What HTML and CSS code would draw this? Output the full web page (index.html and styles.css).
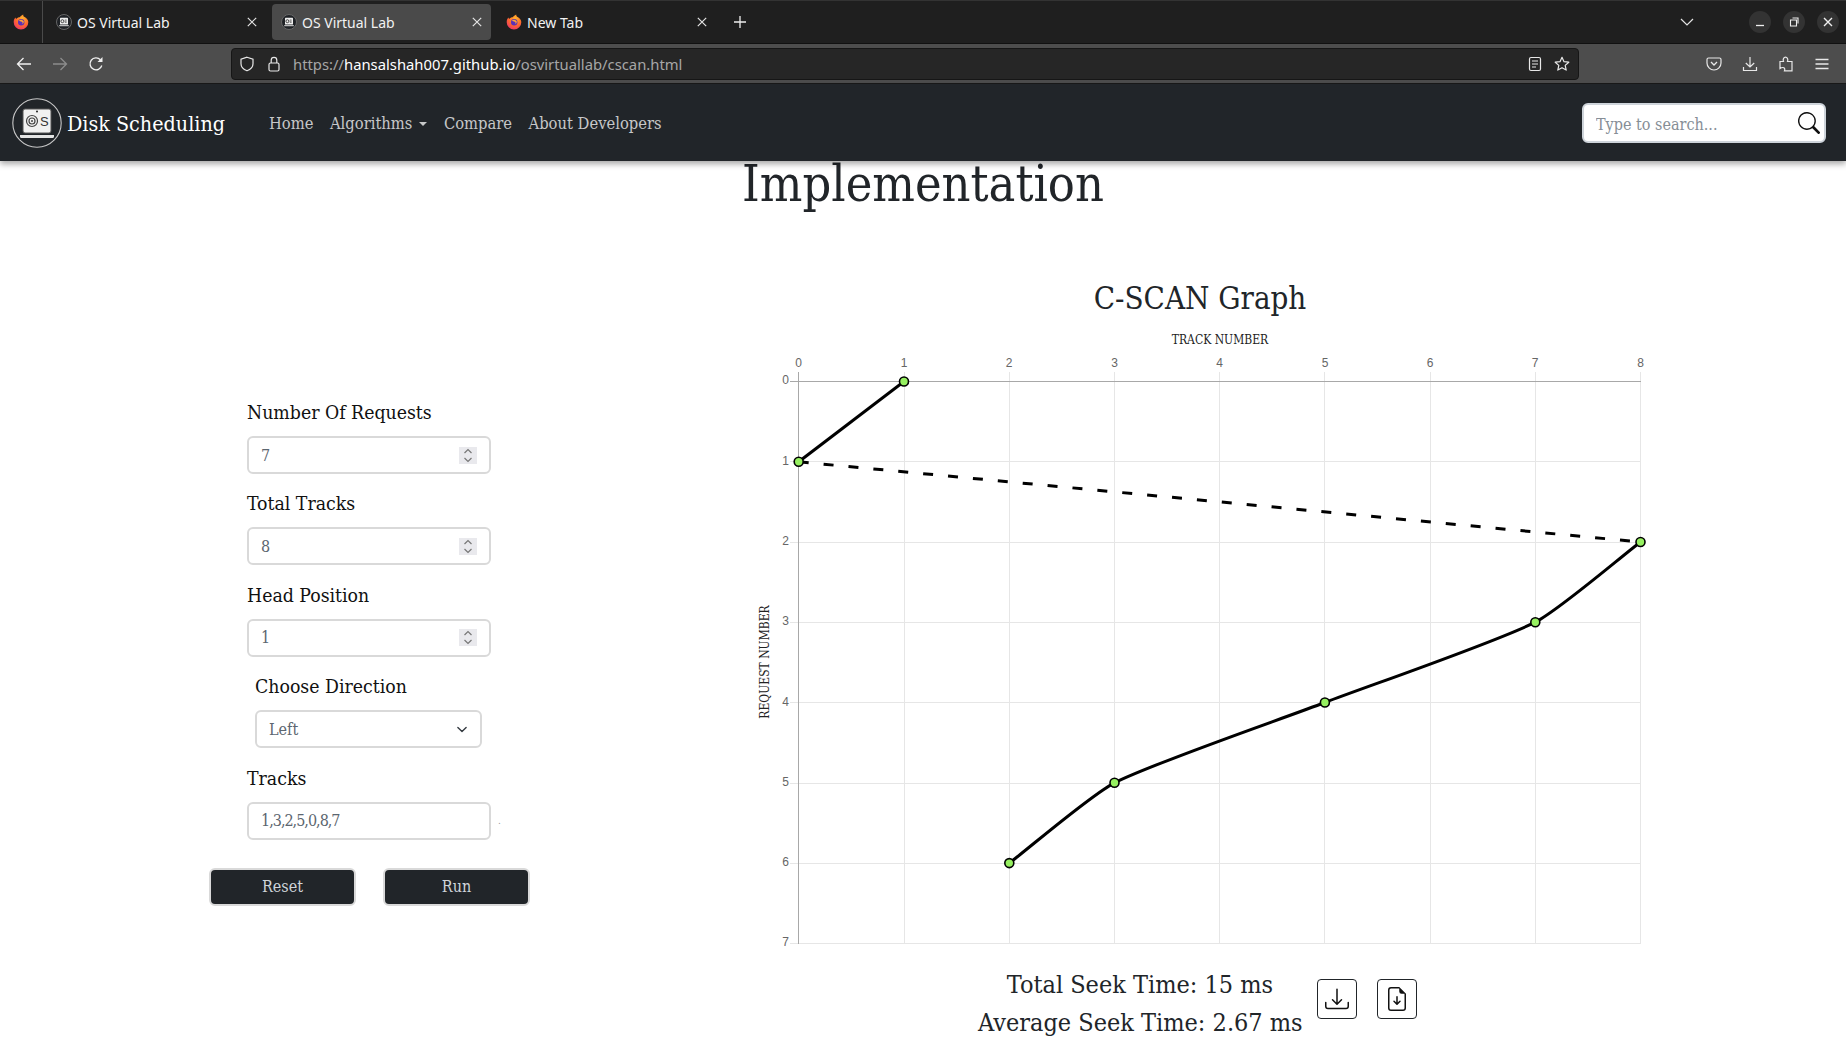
FILE: index.html
```html
<!DOCTYPE html>
<html lang="en">
<head>
    <meta charset="UTF-8">
    <meta name="viewport" content="width=device-width, initial-scale=1.0">
    <title>OS Virtual Lab</title>
    <link rel="stylesheet" href="styles.css">
</head>
<body>
    <svg class="defs" width="0" height="0">
        <defs>
            <radialGradient id="foxGrad" cx="0.6" cy="0.25" r="0.9">
                <stop offset="0" stop-color="#ffb32c"/>
                <stop offset="0.5" stop-color="#ff6a2c"/>
                <stop offset="1" stop-color="#e6247c"/>
            </radialGradient>
            <symbol id="firefox" viewBox="0 0 16 16">
                <path d="M8 15.6A7.4 7.4 0 0 1 .7 8C.7 6 1.5 4.5 2.6 3.6c0 .8.3 1.2.6 1.5C4 3.7 5.4 3.2 6.7 3.2 7.4 2 9 1.2 10.3.4c-.2 1.1.2 1.8.9 2.3 2.3 1.3 4.1 3 4.1 5.3A7.4 7.4 0 0 1 8 15.6z" fill="url(#foxGrad)"/>
                <circle cx="8.2" cy="8.2" r="3.2" fill="#5b2fb8"/>
                <path d="M6 6.3c1.5-1 3.8-.6 4.7 1 .4 1.4-.5 2.6-1.8 2.9 1-.8 1-2-.2-2.5-1-.4-2-.2-2.7-1.4z" fill="#ffa436"/>
            </symbol>
            <symbol id="favicon" viewBox="0 0 16 16">
                <circle cx="8" cy="8" r="7.5" fill="#1f2226" stroke="#666"/>
                <rect x="4" y="3.8" width="8" height="6.8" rx="0.6" fill="#eee"/>
                <circle cx="6.4" cy="7.2" r="1.5" fill="none" stroke="#444"/>
                <path d="M8.8 6h1.8M8.8 7.2h1.8M8.8 8.4h1.8" stroke="#444" stroke-width="0.7"/>
                <rect x="3.2" y="11.2" width="9.6" height="1" fill="#ddd"/>
            </symbol>
            <symbol id="close" viewBox="0 0 12 12">
                <path d="M1.8 1.8l8.4 8.4M10.2 1.8l-8.4 8.4" fill="none" stroke="#e4e4e4" stroke-width="1.2"/>
            </symbol>
        </defs>
    </svg>

    <div class="tabbar">
        <div class="tabbar-logo"><svg class="ico-16"><use href="#firefox"/></svg></div>
        <div class="tab-strip">
            <div class="tab">
                <svg class="ico-16"><use href="#favicon"/></svg>
                <span class="tab-title">OS Virtual Lab</span>
                <svg class="tab-close"><use href="#close"/></svg>
            </div>
            <div class="tab tab-active">
                <svg class="ico-16"><use href="#favicon"/></svg>
                <span class="tab-title">OS Virtual Lab</span>
                <svg class="tab-close"><use href="#close"/></svg>
            </div>
            <div class="tab">
                <svg class="ico-16"><use href="#firefox"/></svg>
                <span class="tab-title">New Tab</span>
                <svg class="tab-close"><use href="#close"/></svg>
            </div>
            <svg class="new-tab" viewBox="0 0 14 14"><path d="M7 1v12M1 7h12" fill="none" stroke="#eee" stroke-width="1.3"/></svg>
        </div>
        <svg class="tabs-chevron" viewBox="0 0 14 8"><path d="M1 1l6 6 6-6" fill="none" stroke="#e4e4e4" stroke-width="1.2"/></svg>
        <div class="win-buttons">
            <span class="win-btn"><svg class="win-ico" viewBox="0 0 12 12"><path d="M2 9.5h8" stroke="#eee" stroke-width="1.3"/></svg></span>
            <span class="win-btn"><svg class="win-ico" viewBox="0 0 12 12"><path d="M2.5 4h6v6h-6zM4.5 2h5.500v5.500" fill="none" stroke="#eee" stroke-width="1.1"/></svg></span>
            <span class="win-btn"><svg class="win-ico" viewBox="0 0 12 12"><path d="M2 2l8 8M10 2l-8 8" fill="none" stroke="#eee" stroke-width="1.4"/></svg></span>
        </div>
    </div>

    <div class="toolbar">
        <div class="toolbar-nav">
            <svg class="ico-16" viewBox="0 0 16 16"><path d="M15 8H1.5M7.5 2L1.5 8l6 6" fill="none" stroke="#f0f0f0" stroke-width="1.3"/></svg>
            <svg class="ico-16" viewBox="0 0 16 16"><path d="M1 8h13.5M8.5 2l6 6-6 6" fill="none" stroke="#8c8c8c" stroke-width="1.3"/></svg>
            <svg class="ico-16" viewBox="0 0 16 16"><path d="M13.8 9.5A6 6 0 1 1 12.4 3.700" fill="none" stroke="#f0f0f0" stroke-width="1.3"/><path d="M14.5 1v5h-5z" fill="#f0f0f0"/></svg>
        </div>
        <div class="urlbar">
            <svg class="ico-16" viewBox="0 0 16 16"><path d="M8 1.2l6 2v4.600c0 3.200-2.600 5.800-6 7-3.400-1.200-6-3.800-6-7V3.200z" fill="none" stroke="#e8e8e8" stroke-width="1.2"/></svg>
            <svg class="ico-16" viewBox="0 0 16 16"><rect x="3" y="7" width="10" height="8" rx="1.5" fill="none" stroke="#e8e8e8" stroke-width="1.2"/><path d="M5.2 7V4.200a2.800 2.800 0 0 1 5.600 0V7" fill="none" stroke="#e8e8e8" stroke-width="1.2"/></svg>
            <span class="url-text">https://<b class="url-host">hansalshah007.github.io</b>/osvirtuallab/cscan.html</span>
            <svg class="ico-16" viewBox="0 0 16 16"><rect x="2.5" y="1.5" width="11" height="13" rx="1.5" fill="none" stroke="#e8e8e8" stroke-width="1.2"/><path d="M5 5h6M5 8h6M5 11h4" stroke="#e8e8e8" stroke-width="1.2"/></svg>
            <svg class="ico-16" viewBox="0 0 16 16"><path d="M8 1.3l2 4.400 4.800.5-3.600 3.200 1 4.700L8 11.700l-4.200 2.400 1-4.700L1.200 6.200 6 5.700z" fill="none" stroke="#e8e8e8" stroke-width="1.2" stroke-linejoin="round"/></svg>
        </div>
        <div class="toolbar-actions">
            <svg class="ico-16" viewBox="0 0 16 16"><path d="M2.5 2h11A1.5 1.5 0 0 1 15 3.5V7a7 7 0 0 1-14 0V3.5A1.5 1.5 0 0 1 2.5 2z" fill="none" stroke="#e8e8e8" stroke-width="1.2"/><path d="M5 6l3 3 3-3" fill="none" stroke="#e8e8e8" stroke-width="1.3"/></svg>
            <svg class="ico-16" viewBox="0 0 16 16"><path d="M8 1v10M3.8 7L8 11l4.200-4M1.5 11v3.500h13V11" fill="none" stroke="#e8e8e8" stroke-width="1.2"/></svg>
            <svg class="ico-16" viewBox="0 0 16 16"><path d="M2 5.5h3.500C4.500 3 6 1.200 7.500 1.200S10.500 3 9.500 5.500h4.500v9.300H6.500c.8-2-.2-3.300-1.700-3.300-1 0-2 .4-2.800 1z" fill="none" stroke="#e8e8e8" stroke-width="1.2"/></svg>
            <svg class="ico-16" viewBox="0 0 16 16"><path d="M1.5 3.5h13M1.5 8h13M1.5 12.5h13" stroke="#e8e8e8" stroke-width="1.3"/></svg>
        </div>
    </div>

    <nav class="navbar">
        <a class="brand" href="#">
            <svg class="brand-logo" viewBox="0 0 50 50">
                <circle cx="25" cy="25" r="24.2" fill="#212529" stroke="#c8c8c8" stroke-width="1.1"/>
                <rect x="11" y="11" width="28" height="24" rx="2" fill="#f1f1f1" stroke="#555"/>
                <circle cx="25" cy="13.5" r="1" fill="#222"/>
                <circle cx="20" cy="23" r="5.5" fill="none" stroke="#444" stroke-width="1.2"/>
                <circle cx="20" cy="23" r="3" fill="none" stroke="#444" stroke-width="1.2"/>
                <circle cx="20" cy="23" r="1" fill="#444"/>
                <text class="brand-logo-s" x="28" y="28">S</text>
                <path d="M8 37h34v1.5a1.5 1.5 0 0 1-1.5 1.5h-31A1.5 1.5 0 0 1 8 38.500z" fill="#e4e4e4"/>
            </svg>
            <span class="brand-name">Disk Scheduling</span>
        </a>
        <ul class="nav-links">
            <li><a href="#">Home</a></li>
            <li><a href="#" class="dropdown-toggle">Algorithms</a></li>
            <li><a href="#">Compare</a></li>
            <li><a href="#">About Developers</a></li>
        </ul>
        <form class="nav-search">
            <input class="search-input" type="text" placeholder="Type to search...">
            <svg class="search-icon" viewBox="0 0 16 16" fill="#111"><path d="M11.742 10.344a6.5 6.5 0 1 0-1.397 1.398h-.001c.03.04.062.078.098.115l3.85 3.85a1 1 0 0 0 1.415-1.414l-3.85-3.85a1.007 1.007 0 0 0-.115-.1zM12 6.5a5.5 5.5 0 1 1-11 0 5.5 5.5 0 0 1 11 0z"/></svg>
        </form>
    </nav>

    <main class="page">
        <h1 class="page-title">Implementation</h1>
        <div class="workspace">
            <form class="controls">
                <div class="field">
                    <label for="numRequests">Number Of Requests</label>
                    <input class="box box-number" id="numRequests" type="number" value="7">
                </div>
                <div class="field">
                    <label for="totalTracks">Total Tracks</label>
                    <input class="box box-number" id="totalTracks" type="number" value="8">
                </div>
                <div class="field">
                    <label for="headPos">Head Position</label>
                    <input class="box box-number" id="headPos" type="number" value="1">
                </div>
                <div class="field field-narrow">
                    <label for="direction">Choose Direction</label>
                    <select class="box box-select" id="direction">
                        <option>Left</option>
                        <option>Right</option>
                    </select>
                </div>
                <div class="field">
                    <label for="tracks">Tracks</label>
                    <div class="tracks-row">
                        <input class="box box-tracks" id="tracks" type="text" value="1,3,2,5,0,8,7">
                        <span class="tracks-msg">.</span>
                    </div>
                </div>
                <div class="actions">
                    <button class="btn-dark" type="reset">Reset</button>
                    <button class="btn-dark" type="button">Run</button>
                </div>
            </form>

            <section class="graph">
                <h2 class="graph-title">C-SCAN Graph</h2>
                <svg class="chart" viewBox="740 320 920 640">
                    <text class="axis-title" x="1220" y="344" text-anchor="middle">TRACK NUMBER</text>
                    <text class="axis-title" transform="translate(769 662) rotate(-90)" text-anchor="middle">REQUEST NUMBER</text>

                    <g class="grid">
                        <path d="M904.5 372V944M1009.5 372V944M1114.5 372V944M1219.5 372V944M1324.5 372V944M1430.5 372V944M1535.5 372V944M1640.5 372V944"/>
                        <path d="M790 461.5H1641M790 542.5H1641M790 622.5H1641M790 702.5H1641M790 783.5H1641M790 863.5H1641M790 943.5H1641"/>
                    </g>
                    <path class="axis" d="M798.5 372V944M790 381.5H1641"/>

                    <g class="tick-x">
                        <text x="798.5" y="367">0</text>
                        <text x="904" y="367">1</text>
                        <text x="1009" y="367">2</text>
                        <text x="1114.5" y="367">3</text>
                        <text x="1219.5" y="367">4</text>
                        <text x="1325" y="367">5</text>
                        <text x="1430" y="367">6</text>
                        <text x="1535" y="367">7</text>
                        <text x="1640.5" y="367">8</text>
                    </g>
                    <g class="tick-y">
                        <text x="789" y="384">0</text>
                        <text x="789" y="465">1</text>
                        <text x="789" y="545">2</text>
                        <text x="789" y="625">3</text>
                        <text x="789" y="706">4</text>
                        <text x="789" y="786">5</text>
                        <text x="789" y="866">6</text>
                        <text x="789" y="946">7</text>
                    </g>

                    <path class="seek-line" d="M904 381.5L798.7 461.8"/>
                    <path class="seek-line seek-jump" d="M798.7 461.8L1640.5 542"/>
                    <path class="seek-line" d="M1640.5 542C1619.5 558 1558.7 610.3 1535.3 622.2C1495.5 642.4 1367 686.4 1324.9 702.5C1282.8 718.6 1154.3 762.6 1114.5 782.8C1091.2 794.7 1030.3 847.1 1009.3 863.1"/>

                    <g class="seek-points">
                        <circle cx="904" cy="381.5" r="4.5"/>
                        <circle cx="798.7" cy="461.8" r="4.5"/>
                        <circle cx="1640.5" cy="542" r="4.5"/>
                        <circle cx="1535.3" cy="622.2" r="4.5"/>
                        <circle cx="1324.9" cy="702.5" r="4.5"/>
                        <circle cx="1114.5" cy="782.8" r="4.5"/>
                        <circle cx="1009.3" cy="863.1" r="4.5"/>
                    </g>
                </svg>

                <div class="results">
                    <div class="seek-times">
                        <p class="seek-time">Total Seek Time: 15 ms</p>
                        <p class="seek-time">Average Seek Time: 2.67 ms</p>
                    </div>
                    <button class="btn-icon" type="button" aria-label="Download graph">
                        <svg class="ico-24" viewBox="0 0 16 16" fill="#111">
                            <path d="M.5 9.9a.5.5 0 0 1 .5.5v2.5a1 1 0 0 0 1 1h12a1 1 0 0 0 1-1v-2.5a.5.5 0 0 1 1 0v2.5a2 2 0 0 1-2 2H2a2 2 0 0 1-2-2v-2.5a.5.5 0 0 1 .5-.5z"/>
                            <path d="M7.646 11.854a.5.5 0 0 0 .708 0l3-3a.5.5 0 0 0-.708-.708L8.5 10.293V1.5a.5.5 0 0 0-1 0v8.793L5.354 8.146a.5.5 0 1 0-.708.708l3 3z"/>
                        </svg>
                    </button>
                    <button class="btn-icon" type="button" aria-label="Download report">
                        <svg class="ico-24" viewBox="0 0 16 16" fill="#111">
                            <path d="M8.5 6.5a.5.5 0 0 0-1 0v3.793L6.354 9.146a.5.5 0 1 0-.708.708l2 2a.5.5 0 0 0 .708 0l2-2a.5.5 0 0 0-.708-.708L8.5 10.293V6.5z"/>
                            <path d="M14 14V4.5L9.5 0H4a2 2 0 0 0-2 2v12a2 2 0 0 0 2 2h8a2 2 0 0 0 2-2zM9.5 3A1.5 1.5 0 0 0 11 4.5h2V14a1 1 0 0 1-1 1H4a1 1 0 0 1-1-1V2a1 1 0 0 1 1-1h5.5v2z"/>
                        </svg>
                    </button>
                </div>
            </section>
        </div>
    </main>
</body>
</html>
```

FILE: styles.css
```css
* {
    box-sizing: border-box;
}

html, body {
    margin: 0;
    padding: 0;
    height: 100%;
    overflow: hidden;
}

body {
    font-family: "DejaVu Serif", serif;
    font-stretch: condensed;
    background-color: #fff;
    color: #212529;
}

.defs {
    position: absolute;
}

.ico-16 {
    width: 16px;
    height: 16px;
    flex: none;
}

.ico-24 {
    width: 24px;
    height: 24px;
}

/* browser chrome */
.tabbar {
    display: flex;
    align-items: center;
    height: 44px;
    background-color: #1f1f1f;
    border-top: 1px solid #333;
    border-bottom: 1px solid #111;
    font-family: "Noto Sans", sans-serif;
    font-stretch: normal;
}

.tabbar-logo {
    display: flex;
    align-items: center;
    justify-content: center;
    width: 43px;
    height: 100%;
    border-right: 1px solid #4a4a4a;
    flex: none;
}

.tab-strip {
    display: flex;
    align-items: center;
    gap: 6px;
    padding-left: 4px;
    flex: 1;
}

.tab {
    display: flex;
    align-items: center;
    gap: 5px;
    width: 219px;
    height: 36px;
    padding: 0 8px 0 9px;
    border-radius: 4px;
    color: #f2f2f2;
    font-size: 14px;
}

.tab-active {
    background-color: #4a4a4a;
}

.tab-title {
    flex: 1;
}

.tab-close {
    width: 12px;
    height: 12px;
}

.new-tab {
    width: 14px;
    height: 14px;
    margin-left: 11px;
}

.tabs-chevron {
    width: 14px;
    height: 8px;
    margin-right: 55px;
}

.win-buttons {
    display: flex;
    gap: 12px;
    padding-right: 7px;
}

.win-btn {
    display: flex;
    align-items: center;
    justify-content: center;
    width: 22px;
    height: 22px;
    border-radius: 50%;
    background-color: #333;
}

.win-ico {
    width: 12px;
    height: 12px;
}

.toolbar {
    display: flex;
    align-items: center;
    height: 40px;
    background-color: #4d4d4d;
    border-bottom: 1px solid #1a1a1a;
    font-family: "Noto Sans", sans-serif;
    font-stretch: normal;
}

.toolbar-nav {
    display: flex;
    gap: 20px;
    width: 231px;
    padding-left: 16px;
    flex: none;
}

.urlbar {
    display: flex;
    align-items: center;
    gap: 11px;
    width: 1348px;
    height: 32px;
    padding: 0 8px 0 7px;
    background-color: #262626;
    border: 1px solid #161616;
    border-radius: 4px;
}

.url-text {
    flex: 1;
    padding-top: 1px;
    color: #a6a6a6;
    font-size: 14.8px;
}

.url-host {
    color: #fff;
    font-weight: normal;
}

.toolbar-actions {
    display: flex;
    gap: 20px;
    margin-left: auto;
    padding-right: 16px;
}

/* site navbar */
.navbar {
    position: relative;
    z-index: 2;
    display: flex;
    align-items: center;
    height: 77px;
    padding: 0 20px 0 12px;
    background-color: #212529;
    box-shadow: 0 3px 6px rgba(0, 0, 0, 0.35);
}

.brand {
    display: flex;
    align-items: center;
    gap: 5px;
    color: #fff;
    text-decoration: none;
}

.brand-logo {
    width: 50px;
    height: 50px;
}

.brand-logo-s {
    font-family: "Liberation Sans", sans-serif;
    font-size: 13px;
    fill: #333;
}

.brand-name {
    padding-top: 2px;
    font-size: 21.3px;
}

.nav-links {
    display: flex;
    gap: 16.5px;
    margin: 0 0 0 44px;
    padding: 2px 0 0;
    list-style: none;
}

.nav-links a {
    color: rgba(255, 255, 255, 0.75);
    font-size: 16.4px;
    text-decoration: none;
}

.dropdown-toggle::after {
    content: "";
    display: inline-block;
    margin-left: 7px;
    vertical-align: 3px;
    border-top: 4px solid;
    border-left: 4px solid transparent;
    border-right: 4px solid transparent;
}

.nav-search {
    position: relative;
    margin-left: auto;
}

.search-input {
    display: block;
    width: 244px;
    height: 40px;
    padding: 3px 40px 0 12px;
    font-family: inherit;
    font-stretch: inherit;
    font-size: 16px;
    border: 2px solid #ced4da;
    border-radius: 6px;
    background-color: #fff;
}

.search-input::placeholder {
    color: #868e96;
}

.search-icon {
    position: absolute;
    top: 9px;
    right: 6px;
    width: 22px;
    height: 22px;
}

/* page content */
.page-title {
    margin: 0;
    height: 46px;
    font-size: 50px;
    font-weight: normal;
    line-height: 46px;
    text-align: center;
}

.workspace {
    display: flex;
    margin-top: 72px;
}

.controls {
    width: 740px;
    padding: 122px 0 0 247px;
    flex: none;
}

.field {
    width: 244px;
    margin-bottom: 18.4px;
}

.field label {
    display: block;
    height: 24px;
    margin-bottom: 11px;
    color: #111;
    font-size: 19.3px;
    line-height: 24px;
}

.field-narrow {
    width: 227px;
    margin-left: 8px;
}

.box {
    display: block;
    width: 100%;
    height: 38px;
    padding: 0 12px;
    background-color: #fff;
    border: 2px solid #d9d9d9;
    border-radius: 6px;
    color: #5c6670;
    font-family: inherit;
    font-stretch: inherit;
    font-size: 16px;
}

.box-number {
    appearance: textfield;
    background-image: url("data:image/svg+xml,%3csvg xmlns='http://www.w3.org/2000/svg' viewBox='0 0 18 17'%3e%3crect width='18' height='17' fill='%23e9e9ed'/%3e%3cpath fill='none' stroke='%23777' stroke-width='1.2' d='M5.5 6l3.5-3.500L12.5 6M5.5 11l3.500 3.500L12.5 11'/%3e%3c/svg%3e");
    background-repeat: no-repeat;
    background-position: right 12px center;
    background-size: 18px 17px;
}

.box-number::-webkit-inner-spin-button {
    appearance: none;
}

.box-select {
    appearance: none;
    background-image: url("data:image/svg+xml,%3csvg xmlns='http://www.w3.org/2000/svg' viewBox='0 0 16 16'%3e%3cpath fill='none' stroke='%23343a40' stroke-linecap='round' stroke-linejoin='round' stroke-width='2' d='M2 5l6 6 6-6'/%3e%3c/svg%3e");
    background-repeat: no-repeat;
    background-position: right 11px center;
    background-size: 14px 11px;
}

.box-tracks {
    flex: none;
    letter-spacing: -1px;
}

.tracks-row {
    display: flex;
    align-items: center;
    gap: 7px;
}

.tracks-msg {
    color: #999;
    font-size: 10px;
}

.actions {
    display: flex;
    gap: 27px;
    margin: 28px 0 0 -38px;
}

.btn-dark {
    width: 147px;
    height: 38px;
    background-color: #212529;
    border: 2px solid #d9d9d9;
    border-radius: 6px;
    color: #cfd4d9;
    font-family: inherit;
    font-stretch: inherit;
    font-size: 16px;
}

.graph {
    width: 920px;
    flex: none;
}

.graph-title {
    margin: 0;
    height: 41px;
    font-size: 31px;
    font-weight: normal;
    line-height: 38px;
    text-align: center;
}

.chart {
    display: block;
    width: 920px;
    height: 640px;
}

.axis-title {
    font-family: "DejaVu Serif", serif;
    font-stretch: condensed;
    font-size: 12px;
    fill: #222;
}

.grid path {
    fill: none;
    stroke: #e6e6e6;
    stroke-width: 1;
}

.axis {
    fill: none;
    stroke: #a8a8a8;
    stroke-width: 1;
}

.tick-x text,
.tick-y text {
    font-family: "Liberation Sans", sans-serif;
    font-size: 12px;
    fill: #666;
}

.tick-x text {
    text-anchor: middle;
}

.tick-y text {
    text-anchor: end;
}

.seek-line {
    fill: none;
    stroke: #000;
    stroke-width: 3;
}

.seek-jump {
    stroke-dasharray: 10 15;
}

.seek-points circle {
    fill: #96f060;
    stroke: #000;
    stroke-width: 1.6;
}

.results {
    display: flex;
    align-items: flex-start;
    gap: 20px;
    margin-top: 6px;
    padding-left: 238px;
}

.seek-times {
    width: 324px;
    margin-right: -5px;
}

.seek-time {
    margin: 0;
    color: #212529;
    font-size: 25px;
    line-height: 38px;
    text-align: center;
    white-space: nowrap;
}

.btn-icon {
    display: flex;
    align-items: center;
    justify-content: center;
    width: 40px;
    height: 40px;
    margin-top: 13px;
    padding: 0;
    background-color: #fff;
    border: 1px solid #212529;
    border-radius: 4px;
}
```
